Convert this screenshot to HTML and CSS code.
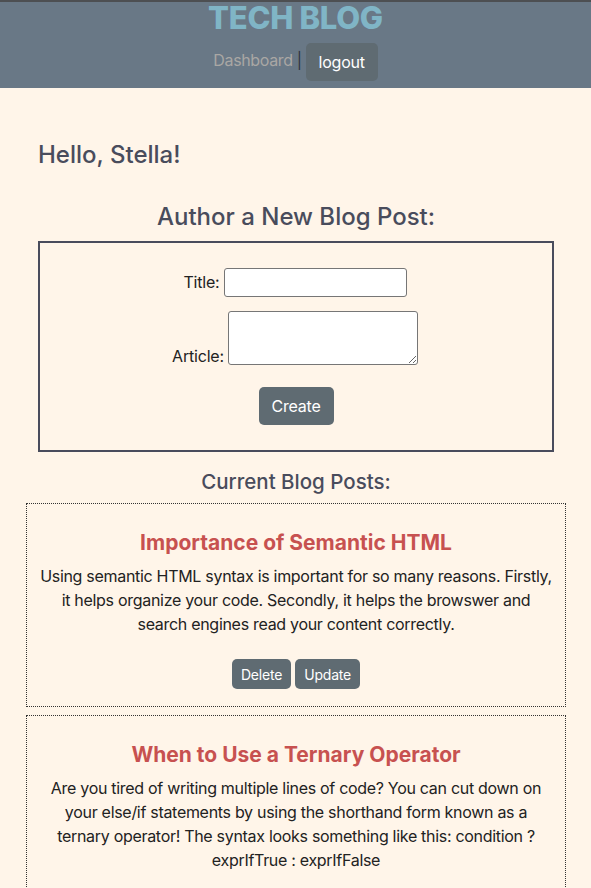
FILE: index.html
```html
<!DOCTYPE html>
<html>
<head>
<meta charset="utf-8">
<link rel="stylesheet" href="styles.css">
</head>
<body>
<header class="site-header">
  <h1 class="brand">TECH BLOG</h1>
  <nav class="nav">
    <a class="nav-link" href="#">Dashboard</a>
    <span class="nav-sep">|</span>
    <button class="btn btn-logout">logout</button>
  </nav>
</header>
<main class="main">
  <h2 class="hello">Hello, Stella!</h2>
  <h2 class="section-title">Author a New Blog Post:</h2>
  <form class="post-form">
    <div class="form-row">
      <label class="form-label" for="title">Title:</label>
      <input class="input-title" id="title" type="text">
    </div>
    <div class="form-row form-row-article">
      <label class="form-label" for="article">Article:</label>
      <textarea class="input-article" id="article"></textarea>
    </div>
    <div class="form-actions">
      <button class="btn btn-create" type="button">Create</button>
    </div>
  </form>
  <h3 class="posts-title">Current Blog Posts:</h3>
  <article class="post">
    <h3 class="post-title">Importance of Semantic HTML</h3>
    <p class="post-body">Using semantic HTML syntax is important for so many reasons. Firstly, it helps organize your code. Secondly, it helps the browswer and search engines read your content correctly.</p>
    <div class="post-actions">
      <button class="btn btn-small">Delete</button>
      <button class="btn btn-small">Update</button>
    </div>
  </article>
  <article class="post">
    <h3 class="post-title">When to Use a Ternary Operator</h3>
    <p class="post-body">Are you tired of writing multiple lines of code? You can cut down on your else/if statements by using the shorthand form known as a ternary operator! The syntax looks something like this: condition ? exprIfTrue : exprIfFalse</p>
    <div class="post-actions">
      <button class="btn btn-small">Delete</button>
      <button class="btn btn-small">Update</button>
    </div>
  </article>
</main>
</body>
</html>
```
FILE: styles.css
```css
* { box-sizing: border-box; }
html, body { margin: 0; padding: 0; }
body {
  background: #fff5e9;
  font-family: Inter, "Liberation Sans", sans-serif;
  color: #222;
}
.site-header {
  background: #697886;
  border-top: 2px solid #4d4f52;
  height: 88px;
  display: flex;
  flex-direction: column;
  align-items: center;
}
.brand {
  margin: 0;
  font-size: 31px;
  line-height: 32px;
  font-weight: 800;
  color: #80b5c6;
  letter-spacing: -0.3px;
}
.nav {
  margin-top: 9px;
  display: flex;
  align-items: center;
  font-size: 16px;
  letter-spacing: -0.35px;
}
.nav-link {
  color: #a9a7a4;
  text-decoration: none;
  margin-top: -4px;
}
.nav-sep {
  color: #2f3540;
  margin: -4px 4px 0 4px;
}
.btn {
  font-family: Inter, "Liberation Sans", sans-serif;
  background: #5f6b72;
  color: #fff;
  border: none;
  border-radius: 5px;
  cursor: pointer;
  letter-spacing: -0.2px;
}
.btn-logout {
  width: 72px;
  height: 38px;
  font-size: 16px;
}
.main {
  padding: 0 25px 40px 26px;
}
.hello {
  margin: 0;
  padding: 52px 12px 0;
  font-size: 24px;
  line-height: 30px;
  font-weight: 500;
  color: #494c5c;
}
.section-title {
  margin: 32px 0 0;
  text-align: center;
  font-size: 24px;
  line-height: 30px;
  font-weight: 500;
  color: #494c5c;
}
.post-form {
  margin: 9px 12px 0;
  border: 2px solid #494c5c;
  height: 211px;
  padding-top: 25px;
  display: flex;
  flex-direction: column;
  align-items: center;
}
.form-row {
  display: flex;
  align-items: flex-end;
  justify-content: center;
  font-size: 16px;
  color: #222;
  letter-spacing: -0.2px;
  margin-left: -2px;
}
.form-row + .form-row { margin-top: 14px; }
.form-label { margin-right: 4px; line-height: 20px; margin-bottom: 5px; }
.form-row-article .form-label { margin-bottom: -1px; }
.input-title {
  width: 183px;
  height: 29px;
  border: 1px solid #767676;
  border-radius: 3px;
  background: #fff;
  margin: 0;
}
.input-article {
  width: 190px;
  height: 54px;
  border: 1px solid #767676;
  border-radius: 3px;
  background: #fff;
  resize: both;
  margin: 0;
}
.form-actions { margin-top: 22px; }
.btn-create {
  width: 75px;
  height: 38px;
  font-size: 16px;
}
.posts-title {
  margin: 18px 0 0;
  text-align: center;
  font-size: 20.5px;
  line-height: 24px;
  font-weight: 500;
  color: #494c5c;
}
.post {
  margin-top: 9px;
  border: 1px dotted #333;
  padding: 24px 12px 17px;
  text-align: center;
}
.post + .post { margin-top: 8px; }
.post-title {
  margin: 0;
  font-size: 21px;
  line-height: 30px;
  font-weight: 700;
  color: #c75150;
}
.post-body {
  margin: 6px 0 0;
  font-size: 16px;
  line-height: 24px;
  color: #222;
  letter-spacing: -0.3px;
}
.post-actions {
  margin-top: 23px;
  display: flex;
  justify-content: center;
  gap: 4px;
}
.btn-small {
  height: 30px;
  padding: 0 9px;
  font-size: 14px;
}
```
